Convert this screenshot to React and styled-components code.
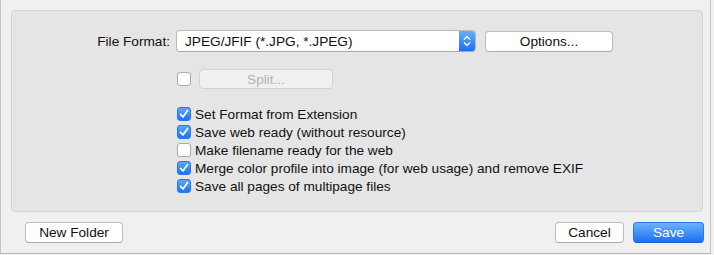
import React from "react";
import styled, { createGlobalStyle, css } from "styled-components";

const FONT = `"Liberation Sans", Arial, sans-serif`;
const FS = "13.65px";

const Global = createGlobalStyle`
  html, body { margin: 0; padding: 0; background: #f0f0f0; }
  body { font-family: ${FONT}; font-size: ${FS}; color: #111; }
  * { box-sizing: border-box; }
`;

const Window = styled.div`
  width: 711px;
  height: 254px;
  background: #f0f0f0;
  border-left: 1px solid #c6c6c6;
  border-right: 1px solid #c6c6c6;
  border-bottom: 1px solid #b8b8b8;
  display: flex;
  flex-direction: column;
`;

const Panel = styled.div`
  margin: 10px 7px 0 10px;
  height: 202px;
  background: #e5e5e5;
  border: 1px solid #d4d4d4;
  border-radius: 4px;
  padding: 19px 0 16px 0;
  display: grid;
  grid-template-columns: 158px 1fr;
  grid-template-rows: auto auto auto;
  align-content: start;
  column-gap: 6px;
`;

const Label = styled.div`
  grid-column: 1;
  text-align: right;
  align-self: center;
  font-size: ${FS};
  color: #111;
`;

const Controls = styled.div`
  grid-column: 2;
  display: flex;
  align-items: center;
  height: ${(p) => p.$h}px;
  gap: ${(p) => p.$gap || 9}px;
  margin-top: ${(p) => p.$mt || 0}px;
  padding-left: ${(p) => p.$pl || 0}px;
`;

const Popup = styled.div`
  width: 300px;
  height: 22px;
  background: #fff;
  border: 1px solid #b9b9b9;
  border-bottom-color: #a8a8a8;
  border-radius: 4px;
  display: flex;
  align-items: center;
  overflow: hidden;
`;

const PopupText = styled.span`
  flex: 1;
  padding-left: 8px;
  font-size: ${FS};
  color: #111;
`;

const Stepper = styled.span`
  width: 16px;
  height: 100%;
  background: linear-gradient(#68b0fb, #1a6ef3);
  display: flex;
  align-items: center;
  justify-content: center;
`;

const Button = styled.button`
  font-family: ${FONT};
  font-size: ${FS};
  height: ${(p) => p.$h || 21}px;
  width: ${(p) => p.$w}px;
  border-radius: 4px;
  padding: 0;
  background: #fff;
  color: #111;
  border: 1px solid #bdbdbd;
  border-bottom-color: #a9a9a9;
  ${(p) =>
    p.$disabled &&
    css`
      background: #f0f0f0;
      color: #b4b4b4;
      border-color: #d2d2d2;
    `}
  ${(p) =>
    p.$primary &&
    css`
      background: linear-gradient(#6cb2fb, #1a70f4);
      border: 1px solid #2a78ee;
      border-bottom-color: #1a5fd6;
      color: #fff;
    `}
`;

const CheckList = styled.div`
  grid-column: 2;
  margin-top: 16px;
  display: flex;
  flex-direction: column;
`;

const CheckRow = styled.label`
  height: 18px;
  display: flex;
  align-items: center;
  gap: 4px;
  padding-left: 1px;
  font-size: ${FS};
  color: #111;
  white-space: nowrap;
`;

const Box = styled.span`
  width: 14px;
  height: 14px;
  border-radius: 3px;
  flex-shrink: 0;
  display: flex;
  align-items: center;
  justify-content: center;
  ${(p) =>
    p.$checked
      ? css`
          background: linear-gradient(#5aa6fb, #1d74f5);
          border: 1px solid #2a78ee;
        `
      : css`
          background: #fff;
          border: 1px solid #acacac;
        `}
`;

const Footer = styled.div`
  flex: 1;
  display: flex;
  align-items: flex-start;
  padding: 10px 6px 0 24px;
`;

const Spacer = styled.div`
  flex: 1;
`;

const FooterGroup = styled.div`
  display: flex;
  gap: 9px;
`;

function Check() {
  return (
    <svg width="10" height="10" viewBox="0 0 10 10">
      <path d="M1.6 5.4 L4 7.9 L8.6 1.6" fill="none" stroke="#fff" strokeWidth="1.7" strokeLinecap="round" strokeLinejoin="round" />
    </svg>
  );
}

function Checkbox({ checked }) {
  return <Box $checked={checked}>{checked && <Check />}</Box>;
}

function StepperIcon() {
  return (
    <svg width="8" height="14" viewBox="0 0 8 14">
      <path d="M1.3 5.2 L4 2.5 L6.7 5.2 M1.3 8.8 L4 11.5 L6.7 8.8" fill="none" stroke="#fff" strokeWidth="1.3" strokeLinecap="round" strokeLinejoin="round" />
    </svg>
  );
}

const options = [
  ["Set Format from Extension", true],
  ["Save web ready (without resource)", true],
  ["Make filename ready for the web", false],
  ["Merge color profile into image (for web usage) and remove EXIF", true],
  ["Save all pages of multipage files", true],
];

export default function App() {
  return (
    <>
      <Global />
      <Window>
        <Panel>
          <Label>File Format:</Label>
          <Controls $h={22}>
            <Popup>
              <PopupText>JPEG/JFIF (*.JPG, *.JPEG)</PopupText>
              <Stepper>
                <StepperIcon />
              </Stepper>
            </Popup>
            <Button $w={128}>Options...</Button>
          </Controls>
          <Controls $h={20} $mt={17} $pl={1} $gap={8}>
            <Checkbox checked={false} />
            <Button $w={134} $h={20} $disabled>
              Split...
            </Button>
          </Controls>
          <CheckList>
            {options.map(([t, c]) => (
              <CheckRow key={t}>
                <Checkbox checked={c} />
                {t}
              </CheckRow>
            ))}
          </CheckList>
        </Panel>
        <Footer>
          <Button $w={98}>New Folder</Button>
          <Spacer />
          <FooterGroup>
            <Button $w={69}>Cancel</Button>
            <Button $w={71} $primary>
              Save
            </Button>
          </FooterGroup>
        </Footer>
      </Window>
    </>
  );
}
